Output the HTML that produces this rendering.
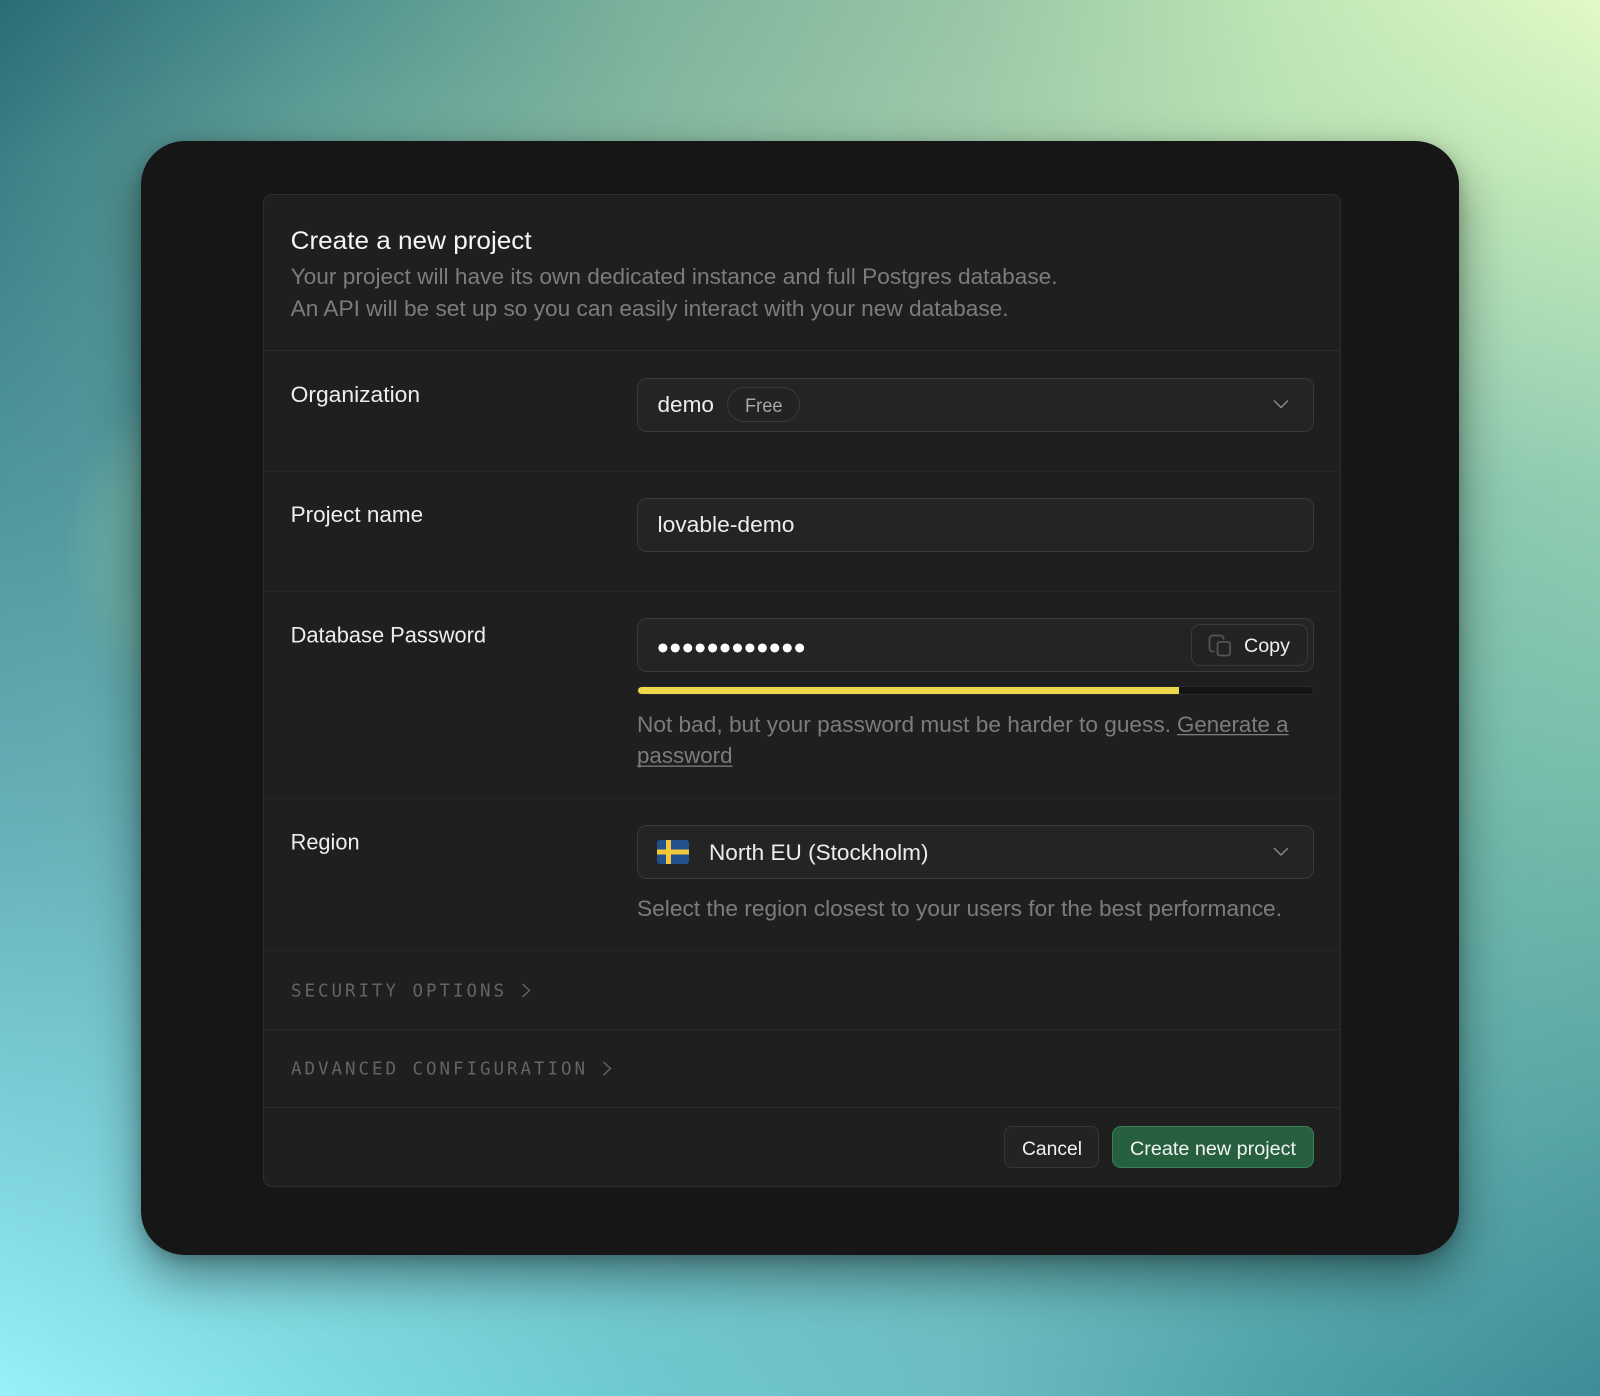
<!DOCTYPE html>
<html lang="en">
<head>
<meta charset="utf-8">
<title>Create a new project</title>
<style>
html,body{margin:0;padding:0;background:#5aa0a0;width:1600px;height:1396px;overflow:hidden}
body{font-family:"Liberation Sans",sans-serif}
#root{position:relative;width:1600px;height:1396px;overflow:hidden}
.abs{position:absolute;box-sizing:border-box}
svg{position:absolute;left:0;top:0;overflow:hidden}
.l{position:absolute;left:0;top:0;width:1600px;height:1396px}
#l0{background:linear-gradient(90deg,#2c6c76 0%,#4f9290 20%,#7cb29c 40%,#98c6a6 60%,#bfe6b6 80%,#e2fac6 100%)}
#l1{background:linear-gradient(90deg,#3d8086 0%,#68a59a 20%,#84b8a0 40%,#9fcbaa 60%,#b9e1b5 80%,#c6ecbb 100%);-webkit-mask-image:linear-gradient(180deg,transparent 0,#000 170px);mask-image:linear-gradient(180deg,transparent 0,#000 170px)}
#l2{background:linear-gradient(90deg,#4f959c 0%,#93ceb2 100%);-webkit-mask-image:linear-gradient(180deg,transparent 170px,#000 480px);mask-image:linear-gradient(180deg,transparent 170px,#000 480px)}
#l3{background:linear-gradient(90deg,#65aeb5 0%,#76bcab 100%);-webkit-mask-image:linear-gradient(180deg,transparent 480px,#000 800px);mask-image:linear-gradient(180deg,transparent 480px,#000 800px)}
#l4{background:linear-gradient(90deg,#7dd2db 0%,#72c0c2 50%,#55a3a3 100%);-webkit-mask-image:linear-gradient(180deg,transparent 800px,#000 1140px);mask-image:linear-gradient(180deg,transparent 800px,#000 1140px)}
#l5{background:linear-gradient(90deg,#99f0f8 0%,#80dce2 20%,#6ec8cf 40%,#6cbdc2 60%,#4ea2a8 80%,#3d8c98 100%);-webkit-mask-image:linear-gradient(180deg,transparent 1140px,#000 1396px);mask-image:linear-gradient(180deg,transparent 1140px,#000 1396px)}
#glow{position:absolute;left:65px;top:395px;width:210px;height:320px;border-radius:50%;background:radial-gradient(closest-side,rgba(108,172,160,.8) 0%,rgba(108,172,160,.72) 60%,rgba(108,172,160,0) 100%)}
#card{left:141px;top:141px;width:1318px;height:1114px;background:#161616;border-radius:44px;box-shadow:0 22px 50px rgba(0,0,0,.42),0 4px 14px rgba(0,0,0,.2)}
#panel{left:263px;top:194px;width:1078px;height:993px;background:#1f1f1f;border:1px solid #2d2d2d;border-radius:9px}
.div{left:264px;width:1076px;height:1px;background:#262626}
.inp{left:636.5px;width:677px;height:54px;background:#242424;border:1.5px solid #3a3a3a;border-radius:10px}
text{font-family:"Liberation Sans",sans-serif;font-size:22px;fill:#ededed}
.m{fill:#7c7c7c}
.mono{font-family:"DejaVu Sans Mono","Liberation Mono",monospace;font-size:17.5px;fill:#646464}
</style>
</head>
<body>
<div id="root">
<div class="l" id="l0"></div>
<div class="l" id="l1"></div>
<div class="l" id="l2"></div>
<div class="l" id="l3"></div>
<div class="l" id="l4"></div>
<div class="l" id="l5"></div>
<div id="glow"></div>

<div class="abs" id="card"></div>
<div class="abs" id="panel"></div>
<div class="abs div" style="top:350px;background:#2d2d2d"></div>
<div class="abs div" style="top:471px"></div>
<div class="abs div" style="top:591px"></div>
<div class="abs div" style="top:798px"></div>
<div class="abs div" style="top:950px"></div>
<div class="abs div" style="top:1029px;background:#2a2a2a"></div>
<div class="abs div" style="top:1107px;background:#2d2d2d"></div>

<div class="abs inp" style="top:377.5px"></div>
<div class="abs" style="left:727px;top:387px;width:73px;height:35px;border:1.5px solid #3a3a3a;border-radius:18px;background:#232323"></div>
<div class="abs inp" style="top:497.5px"></div>
<div class="abs inp" style="top:618px"></div>
<div class="abs" style="left:1191px;top:624px;width:117px;height:42px;border:1.5px solid #393939;border-radius:9px;background:#232323"></div>
<div class="abs" style="left:636.5px;top:686px;width:677px;height:9px;background:#141414;border:1px solid #2a2a2a;border-radius:5px;overflow:hidden"><div style="width:541px;height:100%;background:#ecd84a"></div></div>
<div class="abs inp" style="top:825px"></div>
<div class="abs" style="left:1004px;top:1126px;width:95px;height:42px;background:#232323;border:1.5px solid #363636;border-radius:8px"></div>
<div class="abs" style="left:1112px;top:1126px;width:202px;height:42px;background:#27603e;border:1.5px solid #3b8055;border-radius:9px"></div>

<svg width="1600" height="1396" viewBox="0 0 1600 1396">
  <text x="290.6" y="249" style="font-size:25px;fill:#f5f5f5" textLength="241" lengthAdjust="spacingAndGlyphs">Create a new project</text>
  <text class="m" x="290.6" y="284" textLength="767" lengthAdjust="spacingAndGlyphs">Your project will have its own dedicated instance and full Postgres database.</text>
  <text class="m" x="290.6" y="316" textLength="718" lengthAdjust="spacingAndGlyphs">An API will be set up so you can easily interact with your new database.</text>

  <text x="290.6" y="402" textLength="129.5" lengthAdjust="spacingAndGlyphs">Organization</text>
  <text x="290.6" y="522" textLength="132.5" lengthAdjust="spacingAndGlyphs">Project name</text>
  <text x="290.6" y="642.5" textLength="195.5" lengthAdjust="spacingAndGlyphs">Database Password</text>
  <text x="290.6" y="849.5" textLength="69" lengthAdjust="spacingAndGlyphs">Region</text>

  <text x="657.5" y="412" textLength="56.5" lengthAdjust="spacingAndGlyphs">demo</text>
  <text x="745" y="412" style="font-size:19px;fill:#a8a8a8" textLength="37.5" lengthAdjust="spacingAndGlyphs">Free</text>
  <path d="M1274 400.5l7 7 7-7" fill="none" stroke="#8a8a8a" stroke-width="1.4"/>

  <text x="657.5" y="532" textLength="137" lengthAdjust="spacingAndGlyphs">lovable-demo</text>

  <text x="657" y="658.8" style="font-size:33.5px;fill:#fff" textLength="148.5" lengthAdjust="spacing">••••••••••••</text>
  <g fill="none" stroke="#555" stroke-width="1.8">
    <rect x="1217.5" y="642" width="12.5" height="13.5" rx="2"/>
    <path d="M1214.5 651.5h-2a3 3 0 0 1-3-3v-10a3 3 0 0 1 3-3h8a3 3 0 0 1 3 3v1"/>
  </g>
  <text x="1244" y="652" style="font-size:19px;fill:#f0f0f0" textLength="46" lengthAdjust="spacingAndGlyphs">Copy</text>

  <text class="m" x="637" y="732" textLength="534" lengthAdjust="spacingAndGlyphs">Not bad, but your password must be harder to guess.</text>
  <text class="m" x="1177" y="732" textLength="111.5" lengthAdjust="spacingAndGlyphs">Generate a</text>
  <rect x="1177" y="734" width="111.5" height="1.3" fill="#7c7c7c"/>
  <text class="m" x="637" y="763" textLength="95.5" lengthAdjust="spacingAndGlyphs">password</text>
  <rect x="637" y="765.5" width="95.5" height="1.3" fill="#7c7c7c"/>

  <rect x="657" y="840" width="32" height="24" rx="3" fill="#23518f"/>
  <rect x="666" y="840" width="5" height="24" fill="#f1c93a"/>
  <rect x="657" y="849.5" width="32" height="5" fill="#f1c93a"/>
  <text x="709" y="860" textLength="219.5" lengthAdjust="spacingAndGlyphs">North EU (Stockholm)</text>
  <path d="M1274 848l7 7 7-7" fill="none" stroke="#8a8a8a" stroke-width="1.4"/>
  <text class="m" x="637" y="916" textLength="645" lengthAdjust="spacingAndGlyphs">Select the region closest to your users for the best performance.</text>

  <text class="mono" x="291" y="996.5" textLength="213" lengthAdjust="spacing">SECURITY OPTIONS</text>
  <path d="M522.5 984l7 6.5-7 6.5" fill="none" stroke="#666" stroke-width="1.3"/>
  <text class="mono" x="291" y="1074.5" textLength="294" lengthAdjust="spacing">ADVANCED CONFIGURATION</text>
  <path d="M603.5 1062l7 6.5-7 6.5" fill="none" stroke="#666" stroke-width="1.3"/>

  <text x="1022" y="1155" style="font-size:19px;fill:#f2f2f2" textLength="60" lengthAdjust="spacingAndGlyphs">Cancel</text>
  <text x="1130" y="1155" style="font-size:19px;fill:#f2f2f2" textLength="166" lengthAdjust="spacingAndGlyphs">Create new project</text>
</svg>
</div>
</body>
</html>
